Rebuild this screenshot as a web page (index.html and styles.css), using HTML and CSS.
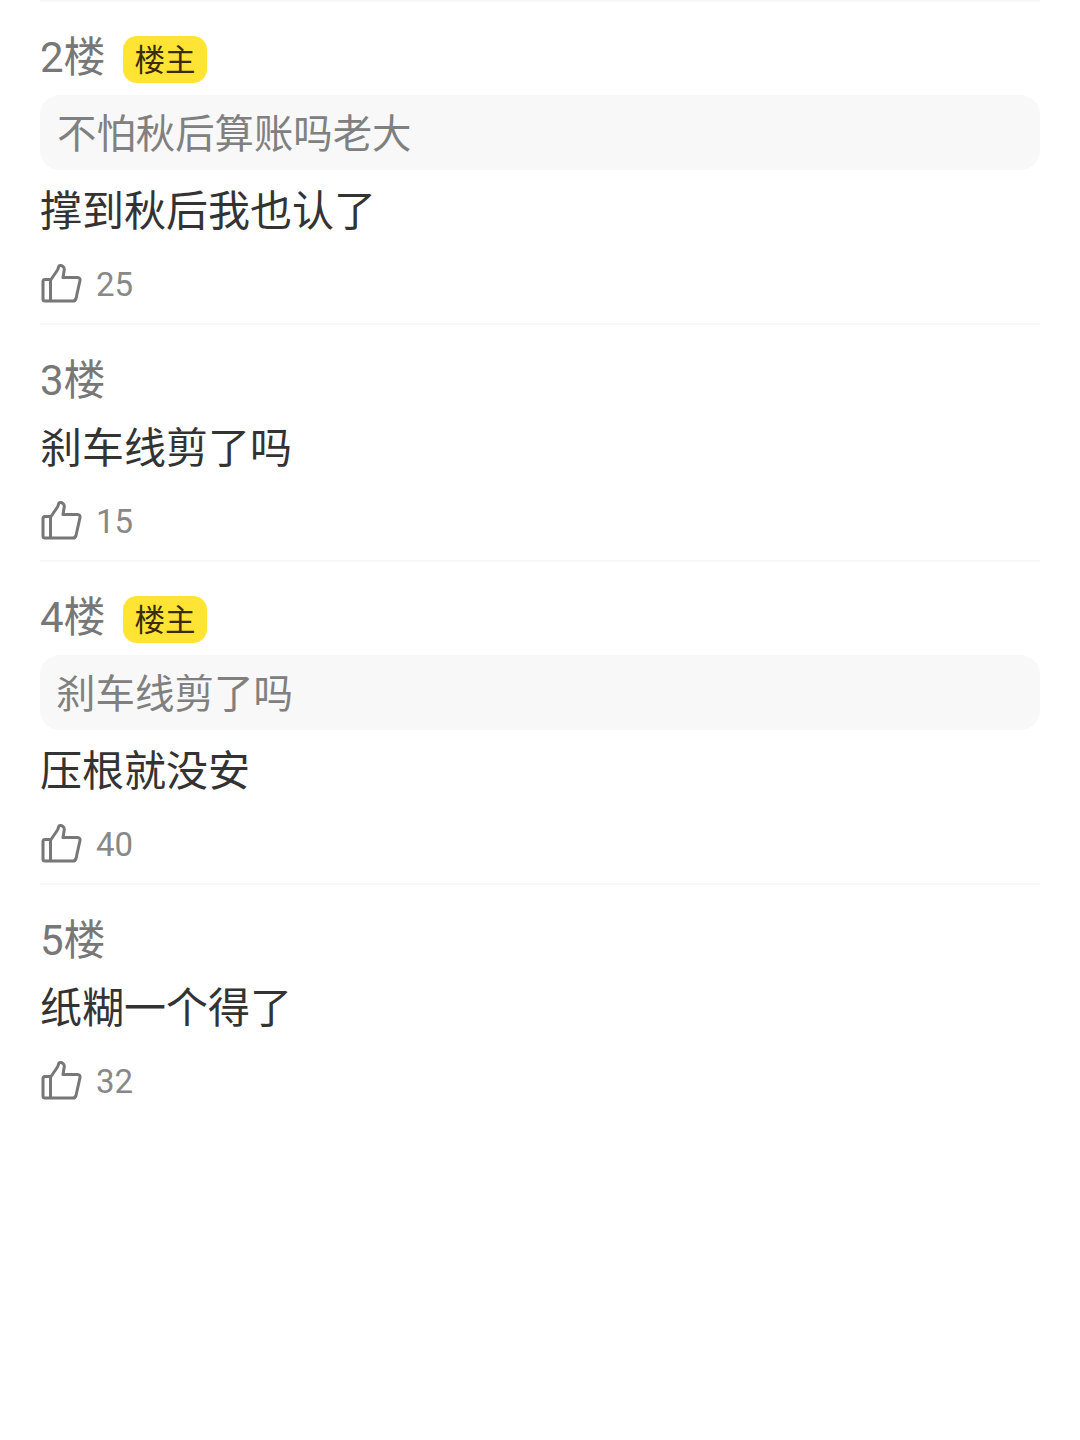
FILE: index.html
```html
<!DOCTYPE html>
<html lang="zh">
<head>
<meta charset="utf-8">
<title>回复</title>
<link rel="stylesheet" href="styles.css">
</head>
<body>
<main class="list">
  <article class="item tall">
    <header class="head"><span class="floor">2楼</span><span class="badge">楼主</span></header>
    <div class="quote q1">不怕秋后算账吗老大</div>
    <p class="text">撑到秋后我也认了</p>
    <div class="like"><svg class="thumb" viewBox="0 0 42 40"><path d="M3 17.500 C3 16.500 3.800 15.500 5 15.500 L11 15.500 L17.500 6 C18.500 4.500 18.500 3 19 1.800 C21.500 0.800 24.500 2.500 24.300 5.500 L23 13.500 L37.500 13.500 C39.500 13.500 40.300 15 40 16.500 L36 34.500 C35.500 36.300 34.500 37 33 37 L5 37 C3.800 37 3 36.200 3 35.200 Z M10.500 16 L10.500 36.800"/></svg><span>25</span></div>
  </article>
  <article class="item short">
    <header class="head"><span class="floor">3楼</span></header>
    <p class="text">刹车线剪了吗</p>
    <div class="like"><svg class="thumb" viewBox="0 0 42 40"><path d="M3 17.500 C3 16.500 3.800 15.500 5 15.500 L11 15.500 L17.500 6 C18.500 4.500 18.500 3 19 1.800 C21.500 0.800 24.500 2.500 24.300 5.500 L23 13.500 L37.500 13.500 C39.500 13.500 40.300 15 40 16.500 L36 34.500 C35.500 36.300 34.500 37 33 37 L5 37 C3.800 37 3 36.200 3 35.200 Z M10.500 16 L10.500 36.800"/></svg><span>15</span></div>
  </article>
  <article class="item tall">
    <header class="head"><span class="floor">4楼</span><span class="badge">楼主</span></header>
    <div class="quote q2">刹车线剪了吗</div>
    <p class="text">压根就没安</p>
    <div class="like"><svg class="thumb" viewBox="0 0 42 40"><path d="M3 17.500 C3 16.500 3.800 15.500 5 15.500 L11 15.500 L17.500 6 C18.500 4.500 18.500 3 19 1.800 C21.500 0.800 24.500 2.500 24.300 5.500 L23 13.500 L37.500 13.500 C39.500 13.500 40.300 15 40 16.500 L36 34.500 C35.500 36.300 34.500 37 33 37 L5 37 C3.800 37 3 36.200 3 35.200 Z M10.500 16 L10.500 36.800"/></svg><span>40</span></div>
  </article>
  <article class="item short last">
    <header class="head"><span class="floor">5楼</span></header>
    <p class="text">纸糊一个得了</p>
    <div class="like"><svg class="thumb" viewBox="0 0 42 40"><path d="M3 17.500 C3 16.500 3.800 15.500 5 15.500 L11 15.500 L17.500 6 C18.500 4.500 18.500 3 19 1.800 C21.500 0.800 24.500 2.500 24.300 5.500 L23 13.500 L37.500 13.500 C39.500 13.500 40.300 15 40 16.500 L36 34.500 C35.500 36.300 34.500 37 33 37 L5 37 C3.800 37 3 36.200 3 35.200 Z M10.500 16 L10.500 36.800"/></svg><span>32</span></div>
  </article>
</main>
</body>
</html>
```
FILE: styles.css
```css
html, body { margin: 0; padding: 0; background: #fff; }
body {
  width: 1080px;
  height: 1440px;
  overflow: hidden;
  font-family: Roboto, "Noto Sans CJK SC", sans-serif;
}
.list {
  margin: 0 40px;
  border-top: 2px solid #f7f7f7;
}
.item {
  box-sizing: border-box;
  border-bottom: 2px solid #f7f7f7;
  padding-top: 28px;
}
.tall { height: 323px; }
.short { height: 237px; }
.last { border-bottom: 0; }
.head {
  display: flex;
  align-items: center;
  height: 54px;
  gap: 17.500px;
}
.floor { font-size: 42px; color: #777; line-height: 54px; margin-top: 2px; }
.badge {
  width: 84px;
  height: 47px;
  border-radius: 14px;
  background: #ffe433;
  color: #3a2a05;
  font-size: 30.500px;
  line-height: 49px;
  text-align: center;
  margin-top: 4px;
}
.quote {
  height: 75px;
  margin-top: 11px;
  border-radius: 20px;
  background: #f8f8f8;
  color: #808080;
  line-height: 79px;
}
.q1 { font-size: 39.400px; padding-left: 17px; }
.q2 { font-size: 39.500px; padding-left: 16px; }
.text {
  margin: 0;
  padding-top: 15px;
  height: 61px;
  font-size: 42px;
  line-height: 54px;
  color: #333;
}
.like {
  display: flex;
  align-items: center;
  gap: 14px;
  margin-top: 18px;
  height: 40px;
  font-size: 33px;
  color: #888;
}
.thumb {
  width: 42px;
  height: 40px;
  fill: none;
  stroke: #777;
  stroke-width: 3;
  stroke-linejoin: round;
  stroke-linecap: round;
}
```
